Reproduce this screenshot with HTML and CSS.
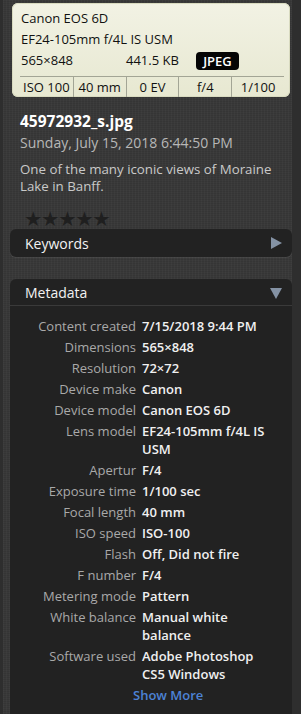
FILE: index.html
```html
<!DOCTYPE html>
<html>
	<head>
		<meta charset="utf-8">
		<title>Photo info</title>
		<link rel="stylesheet" href="styles.css">
	</head>
	<body>
		<div class="side">
			<div class="card">
				<div class="card-line">Canon EOS 6D</div>
				<div class="card-line">EF24-105mm f/4L IS USM</div>
				<div class="card-line card-row">
					<span>565×848</span>
					<span>441.5 KB</span>
					<span class="badge">JPEG</span>
				</div>
				<ul class="card-cells">
					<li>ISO 100</li>
					<li>40 mm</li>
					<li>0 EV</li>
					<li>f/4</li>
					<li>1/100</li>
				</ul>
			</div>

			<div class="info">
				<div class="info-name">45972932_s.jpg</div>
				<div class="info-date">Sunday, July 15, 2018 6:44:50 PM</div>
				<div class="info-desc">One of the many iconic views of Moraine Lake in Banff.</div>
				<div class="info-stars">★★★★★</div>
			</div>

			<div class="panel">
				<div class="panel-head">
					<span>Keywords</span>
					<svg class="panel-arrow" width="12" height="12" viewBox="0 0 12 12"><polygon points="1,0 12,6 1,12" fill="#8492a4"/></svg>
				</div>
			</div>

			<div class="panel panel-open">
				<div class="panel-head">
					<span>Metadata</span>
					<svg class="panel-arrow" width="12" height="12" viewBox="0 0 12 12"><polygon points="0,1 12,1 6,12" fill="#8492a4"/></svg>
				</div>
				<dl class="meta">
					<dt>Content created</dt><dd>7/15/2018 9:44 PM</dd>
					<dt>Dimensions</dt><dd>565×848</dd>
					<dt>Resolution</dt><dd>72×72</dd>
					<dt>Device make</dt><dd>Canon</dd>
					<dt>Device model</dt><dd>Canon EOS 6D</dd>
					<dt>Lens model</dt><dd>EF24-105mm f/4L IS USM</dd>
					<dt>Apertur</dt><dd>F/4</dd>
					<dt>Exposure time</dt><dd>1/100 sec</dd>
					<dt>Focal length</dt><dd>40 mm</dd>
					<dt>ISO speed</dt><dd>ISO-100</dd>
					<dt>Flash</dt><dd>Off, Did not fire</dd>
					<dt>F number</dt><dd>F/4</dd>
					<dt>Metering mode</dt><dd>Pattern</dd>
					<dt>White balance</dt><dd>Manual white balance</dd>
					<dt>Software used</dt><dd>Adobe Photoshop CS5 Windows</dd>
				</dl>
				<div class="show-more">Show More</div>
			</div>
		</div>
	</body>
</html>
```

FILE: styles.css
```css
* {
	margin: 0;
	padding: 0;
	list-style: none;
	box-sizing: border-box;
}

body {
	background: #2e2e2e;
	font-family: "Open Sans", "Noto Sans", sans-serif;
	font-size: 13px;
	height: 714px;
	overflow: hidden;
}

.side {
	margin-left: 3px;
	width: 289px;
	height: 714px;
	padding: 3px 0 0 7px;
	background-color: #393939;
	background-image:
		repeating-linear-gradient(0deg, rgba(0, 0, 0, 0.07) 0 1px, transparent 1px 2px),
		repeating-linear-gradient(90deg, rgba(255, 255, 255, 0.025) 0 1px, transparent 1px 3px);
}

/* 相机信息卡片 */
.card {
	margin-left: 2px;
	width: 278px;
	height: 94px;
	padding: 5px 6px 0 9px;
	border-radius: 6px;
	background: linear-gradient(#f2f2e4, #e7e8d1);
	box-shadow: inset 0 0 0 1px #d9dbc0;
	color: #111;
	font-size: 13px;
}

.card-line {
	height: 21px;
	line-height: 21px;
}

.card-row {
	display: grid;
	grid-template-columns: 105px 70px auto;
	align-items: center;
}

.badge {
	justify-self: start;
	width: 43px;
	height: 18px;
	line-height: 18px;
	border-radius: 4px;
	background: #050505;
	color: #fff;
	font-weight: 600;
	text-align: center;
}

.card-cells {
	display: grid;
	grid-template-columns: repeat(5, 1fr);
	margin: 5px 0 0 -1px;
	border-top: 1px solid #a3a595;
	height: 21px;
}

.card-cells li {
	text-align: center;
	line-height: 20px;
	border-left: 1px solid #a3a595;
}

.card-cells li:first-child {
	border-left: none;
}

/* 文件信息 */
.info {
	padding: 14px 14px 0 10px;
}

.info-name {
	color: #fff;
	font-weight: 700;
	font-size: 15.5px;
	line-height: 21px;
}

.info-date {
	color: #b7b7b7;
	font-size: 14px;
	line-height: 21px;
}

.info-desc {
	color: #c9c9c9;
	font-size: 13.3px;
	line-height: 17px;
	margin-top: 8px;
}

.info-stars {
	color: #1f1f1f;
	font-family: "DejaVu Sans", sans-serif;
	font-size: 20.5px;
	letter-spacing: -1.3px;
	line-height: 22px;
	margin: 13px 0 0 4px;
}

/* 面板 */
.panel {
	width: 282px;
	margin-top: -1px;
	background: #222;
	border-radius: 6px;
	box-shadow: 0 1px 0 rgba(255, 255, 255, 0.08);
}

.panel-open {
	margin-top: 22px;
	border-radius: 6px 6px 0 0;
	height: 440px;
}

.panel-head {
	display: flex;
	align-items: center;
	justify-content: space-between;
	height: 28px;
	padding: 0 10px 0 15px;
	color: #f2f2f2;
	font-size: 14px;
}

.panel-open .panel-head {
	height: 27px;
	padding-top: 1px;
	border-bottom: 1px solid #3a3a3a;
}

.meta {
	display: grid;
	grid-template-columns: 116px 1fr;
	column-gap: 6px;
	row-gap: 3px;
	padding: 11px 20px 0 10px;
	line-height: 18px;
}

.meta dt {
	color: #a9a9a9;
	text-align: right;
}

.meta dd {
	color: #f0f0f0;
	font-weight: 600;
}

.show-more {
	margin: 2px 0 0 123px;
	color: #4d82d6;
	font-weight: 600;
	line-height: 20px;
}
```
